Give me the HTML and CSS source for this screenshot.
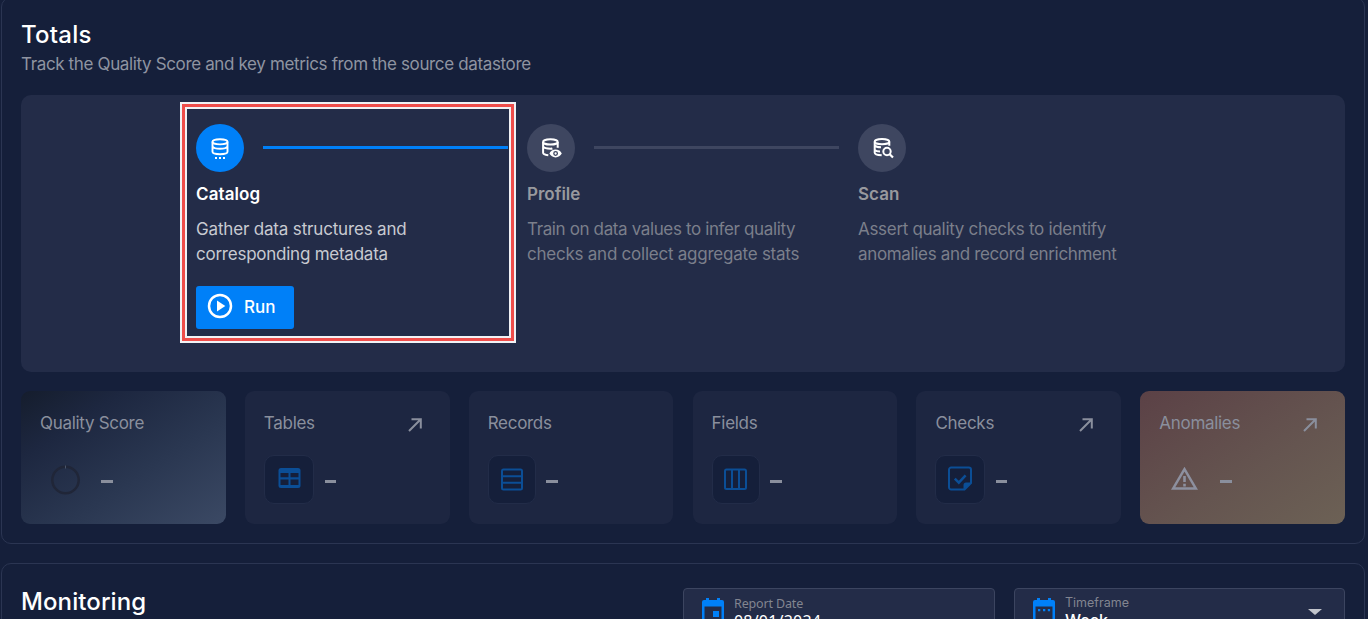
FILE: index.html
```html
<!DOCTYPE html>
<html lang="en">
<head>
<meta charset="utf-8">
<title>Datastore overview</title>
<link rel="stylesheet" href="styles.css">
</head>
<body>
<main class="page">
  <section class="panel totals">
    <h2 class="title title-totals">Totals</h2>
    <p class="subtitle">Track the Quality Score and key metrics from the source datastore</p>

    <div class="steps">
      <article class="step active">
        <div class="step-head">
          <span class="dot"><svg width="24" height="24" viewBox="0 0 24 24" fill="none" stroke="#fff" stroke-width="1.900"><ellipse cx="12" cy="5.800" rx="7.500" ry="2.600"/><path d="M4.500 5.800v10c0 1.700 2.500 2.400 7.500 2.400s7.500-.7 7.500-2.400v-10M4.500 10.500c.9 1.500 3.500 2.300 7.500 2.300s6.600-.8 7.500-2.300"/><path d="M7 22h2M11 22h2M15 22h2"/></svg></span>
          <span class="line"></span>
        </div>
        <h3 class="step-name">Catalog</h3>
        <p class="step-text"><span class="t1">Gather data structures and</span><br><span class="t2">corresponding metadata</span></p>
        <button class="run"><svg width="28" height="28" viewBox="0 0 28 28"><circle cx="14" cy="14" r="11" fill="none" stroke="#fff" stroke-width="2.500"/><path d="M11 8.400v11.200l8.300-5.600z" fill="#fff"/></svg><span>Run</span></button>
      </article>
      <article class="step">
        <div class="step-head">
          <span class="dot"><svg width="24" height="24" viewBox="0 0 24 24" fill="none" stroke="#fff" stroke-width="2"><ellipse cx="11.400" cy="5.900" rx="7.300" ry="2.600"/><path d="M4.100 5.900v10.800c0 1.200 2 2.100 5.200 2.500M18.700 5.900v5.800M4.100 10.700c1 1.300 3.800 2 7.300 2 1 0 1.500 0 2-.2"/><path d="M10.400 17.500c1.200-2.300 3.500-3.900 6.200-3.900s5 1.600 6.200 3.900c-1.200 2.300-3.500 3.900-6.200 3.900s-5-1.600-6.200-3.900z" fill="#fff" stroke="none"/><circle cx="16.600" cy="17.500" r="1.800" stroke="#3e4660" stroke-width="1.300"/></svg></span>
          <span class="line"></span>
        </div>
        <h3 class="step-name">Profile</h3>
        <p class="step-text"><span class="t3">Train on data values to infer quality</span><br><span class="t4">checks and collect aggregate stats</span></p>
      </article>
      <article class="step">
        <div class="step-head">
          <span class="dot"><svg width="24" height="24" viewBox="0 0 24 24" fill="none" stroke="#fff" stroke-width="2"><ellipse cx="12" cy="5.700" rx="7.300" ry="2.600"/><path d="M4.700 5.700v11c0 1.300 2.500 2.300 7 2.600M19.300 5.700v4M4.700 9.500c1 1.200 3 1.700 6.300 1.800M4.700 14c1 1.100 2.500 1.500 5.300 1.600"/><circle cx="17" cy="15.500" r="3.700"/><path d="M19.700 18.200l3.300 3.300" stroke-width="2.200"/></svg></span>
        </div>
        <h3 class="step-name">Scan</h3>
        <p class="step-text"><span class="t5">Assert quality checks to identify</span><br><span class="t6">anomalies and record enrichment</span></p>
      </article>
      <div class="highlight"></div>
    </div>

    <div class="cards">
      <article class="card score">
        <div class="card-head"><span>Quality Score</span></div>
        <div class="card-body"><span class="plain"><svg width="32" height="32" viewBox="0 0 32 32"><circle cx="16.500" cy="16" r="13.200" fill="none" stroke="#202638" stroke-width="2.500"/><path d="M16.500 1.500v3" stroke="#4a566b"/></svg></span><i class="dash"></i></div>
      </article>
      <article class="card">
        <div class="card-head"><span>Tables</span><svg class="arrow" width="14" height="14" viewBox="0 0 14 14"><path d="M1 13L12 2M3.500 1.200h9.300v9.300"/></svg></div>
        <div class="card-body"><span class="tile w49"><svg width="24" height="24" viewBox="0 0 24 24"><rect x="1.500" y="1" width="22" height="20" rx="2.500" fill="#0b4e96"/><path d="M3.500 6h8v4.300h-8zM13.500 6h8v4.300h-8zM3.500 12.500h8V18h-8zM13.500 12.500h8V18h-8z" fill="#151f3a"/></svg></span><i class="dash"></i></div>
      </article>
      <article class="card">
        <div class="card-head"><span>Records</span></div>
        <div class="card-body"><span class="tile"><svg width="24" height="24" viewBox="0 0 24 24" fill="none" stroke="#0b4e96" stroke-width="2"><rect x="2" y="2.500" width="20" height="20" rx="1.500"/><path d="M2 9.200h20M2 15.800h20"/></svg></span><i class="dash"></i></div>
      </article>
      <article class="card">
        <div class="card-head"><span>Fields</span></div>
        <div class="card-body"><span class="tile"><svg width="24" height="24" viewBox="0 0 24 24" fill="none" stroke="#0b4e96" stroke-width="2"><rect x="1" y="2.500" width="21" height="19.500" rx="1.500"/><path d="M8 2.500V22M15 2.500V22"/></svg></span><i class="dash"></i></div>
      </article>
      <article class="card">
        <div class="card-head"><span>Checks</span><svg class="arrow" width="14" height="14" viewBox="0 0 14 14"><path d="M1 13L12 2M3.500 1.200h9.300v9.300"/></svg></div>
        <div class="card-body"><span class="tile w49"><svg width="26" height="26" viewBox="0 0 26 26" fill="none" stroke="#0b4e96" stroke-width="2"><path d="M17.500 23.500H4.200A2.200 2.200 0 0 1 2 21.300V3.700A2.200 2.200 0 0 1 4.200 1.500h17.600A2.200 2.200 0 0 1 24 3.700V17z"/><path d="M16.500 23.500V19a2.500 2.500 0 0 1 2.500-2.500H25z" fill="#0b4e96" stroke="none"/><path d="M7.800 12.700l4 4 6.800-7.300" stroke-width="2.500"/></svg></span><i class="dash"></i></div>
      </article>
      <article class="card anomalies">
        <div class="card-head"><span>Anomalies</span><svg class="arrow" width="14" height="14" viewBox="0 0 14 14"><path d="M1 13L12 2M3.500 1.200h9.300v9.300"/></svg></div>
        <div class="card-body"><span class="plain"><svg width="28" height="26" viewBox="0 0 28 26"><path d="M14.500 2.200L3.200 21.400h22.600z" fill="none" stroke="#8d909f" stroke-width="2.500"/><path d="M14.500 9v6M14.500 16.800v2.600" stroke="#8d909f" stroke-width="2.600"/></svg></span><i class="dash"></i></div>
      </article>
    </div>
  </section>

  <section class="panel monitoring">
    <h2 class="title title-monitoring">Monitoring</h2>
    <div class="field date">
      <svg width="22" height="26" viewBox="0 0 22 26"><path d="M2 2h2V0h3v2h8V0h3v2h2a2 2 0 0 1 2 2v20H0V4a2 2 0 0 1 2-2zM2.500 8.500V24h17V8.500z" fill="#0080f8" fill-rule="evenodd"/><path d="M11 13h6v6h-6z" fill="#0080f8"/></svg>
      <div class="field-text"><span class="label">Report Date</span><span class="value">08/01/2024</span></div>
    </div>
    <div class="field frame">
      <svg width="22" height="26" viewBox="0 0 22 26"><path d="M2 2h2V0h3v2h8V0h3v2h2a2 2 0 0 1 2 2v20H0V4a2 2 0 0 1 2-2zM2.500 8.500V24h17V8.500z" fill="#0080f8" fill-rule="evenodd"/><path d="M5 11h2.300v2.300H5zM10 11h2.300v2.300H10zM14.800 11h2.300v2.300h-2.300z" fill="#0080f8"/></svg>
      <div class="field-text"><span class="label">Timeframe</span><span class="value">Week</span></div>
      <i class="caret"></i>
    </div>
  </section>
</main>
</body>
</html>
```
FILE: styles.css
```css
* { box-sizing: border-box; }
body { margin: 0; background: #151f3a; color: #fff; font-family: Inter, "Noto Sans", sans-serif; overflow: hidden; }
h2, h3, p { margin: 0; white-space: nowrap; }
.page { height: 619px; overflow: hidden; padding: 0 3px 0 1px; }
.panel { border: 1px solid #2b3552; border-radius: 10px; }
.totals { height: 547px; margin-top: -3px; padding: 19px 19px 0; }
.title { font-size: 24px; line-height: 36px; font-weight: 500; }
.title-totals { letter-spacing: 0.25px; }
.subtitle { height: 42px; margin-top: -1px; margin-bottom: 1px; font-size: 17px; line-height: 24px; color: #8f94a1; letter-spacing: -0.36px; }

.steps { position: relative; display: flex; height: 277px; padding: 29px 0 0 175px; border-radius: 10px; background: #232c48; }
.step { width: 331px; }
.step-head { display: flex; align-items: center; height: 48px; }
.dot { display: flex; align-items: center; justify-content: center; width: 48px; height: 48px; border-radius: 50%; background: #3e4660; }
.active .dot { background: #0080f8; }
.line { width: 245px; height: 3px; margin: 0 0 1px 19px; background: #3e4660; }
.active .line { background: #0080f8; }
.step-name { margin-top: 10px; font-size: 17px; line-height: 24px; font-weight: 600; color: #98999e; }
.active .step-name { color: #fff; letter-spacing: 0.1px; }
.step-text { margin-top: 11px; font-size: 17px; line-height: 25px; color: #7b7f8b; letter-spacing: -0.3px; }
.active .step-text { color: #c8cad1; }
.t1 { letter-spacing: -0.17px; }
.t2 { letter-spacing: -0.24px; }
.t3 { letter-spacing: -0.37px; }
.t4 { letter-spacing: -0.24px; }
.t6 { letter-spacing: -0.34px; }
.run { display: flex; align-items: center; gap: 10px; width: 98px; height: 43px; margin-top: 19px; padding: 0 10px; border: 0; border-radius: 3px; background: #0080f8; color: #fff; font: 500 17px Inter, "Noto Sans", sans-serif; }
.run svg { margin-top: -3px; }
.run span { margin-top: -1px; }
.highlight { position: absolute; left: 159px; top: 7px; width: 336px; height: 241px; border: 2px solid #f1f2f5; outline: 2px solid #f1f2f5; outline-offset: -7px; box-shadow: inset 0 0 0 3px #f04e4b; }

.cards { display: grid; grid-template-columns: repeat(6, 1fr); gap: 19.2px; margin-top: 19px; }
.card { height: 133px; padding: 19px 19px 0; border-radius: 9px; background: #1d2641; }
.score { background: linear-gradient(147deg, #151d2d 0%, #1d2740 25%, #2a3751 60%, #3b4964 100%); }
.anomalies { background: linear-gradient(147deg, #5b4146 0%, #655550 58%, #6c6155 100%); }
.card-head { display: flex; justify-content: space-between; height: 26px; font-size: 17px; line-height: 26px; color: #8a8f9d; letter-spacing: -0.3px; white-space: nowrap; }
.arrow { margin: 8px 9px 0 0; fill: none; stroke: #8a8f9d; stroke-width: 2; }
.card-body { display: flex; align-items: center; height: 49px; margin-top: 19px; }
.tile { display: flex; align-items: center; justify-content: center; width: 48px; height: 49px; border: 1px solid #222c48; border-radius: 10px; background: #151f3a; }
.w49 { width: 50px; }
.tile svg { margin-top: -1px; }
.plain { display: flex; align-items: center; justify-content: center; width: 50px; height: 49px; }
.dash { width: 12px; height: 3px; margin: 3px 0 0 10px; background: #8a8f9d; }
.w49 + .dash { width: 11px; margin-left: 11px; }
.plain + .dash { margin-left: 11px; }

.monitoring { display: flex; height: 200px; margin-top: 19px; padding: 24px 19px 0; }
.title-monitoring { line-height: 27px; letter-spacing: 0.1px; }
.field { display: flex; height: 60px; border: 1px solid #3c4560; border-radius: 4px; background: #232c48; padding: 9px 18px; }
.date { width: 312px; margin-left: auto; }
.frame { width: 331px; margin-left: 19px; }
.field svg { margin-right: 10px; }
.field-text { display: flex; flex-direction: column; }
.label { font-size: 12.500px; line-height: 12px; color: #828590; margin-top: -1px; }
.value { font-size: 16px; line-height: 22px; }
.date .field-text { font-family: "Noto Sans", sans-serif; }
.date .label { line-height: 13px; letter-spacing: -0.15px; }
.date .value { letter-spacing: 0.2px; }
.frame .value { font-weight: 500; }
.caret { margin: 11px 4px 0 auto; width: 0; height: 0; border: 7px solid transparent; border-top: 6px solid #c2c5cc; border-bottom: 0; }
```
